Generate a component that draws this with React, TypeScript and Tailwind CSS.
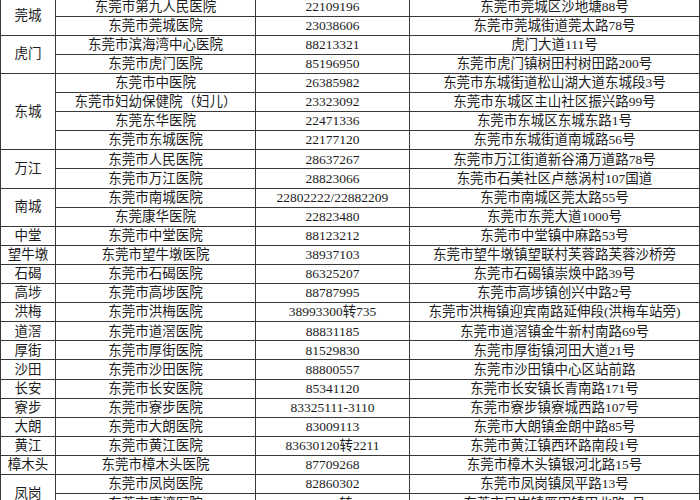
import React from "react";

type Hospital = { name: string; phone: string; address: string };
type Town = { town: string; hospitals: Hospital[] };

const towns: Town[] = [
  {
    town: "莞城",
    hospitals: [
      { name: "东莞市第九人民医院", phone: "22109196", address: "东莞市莞城区沙地塘88号" },
      { name: "东莞市莞城医院", phone: "23038606", address: "东莞市莞城街道莞太路78号" },
    ],
  },
  {
    town: "虎门",
    hospitals: [
      { name: "东莞市滨海湾中心医院", phone: "88213321", address: "虎门大道111号" },
      { name: "东莞市虎门医院", phone: "85196950", address: "东莞市虎门镇树田村树田路200号" },
    ],
  },
  {
    town: "东城",
    hospitals: [
      { name: "东莞市中医院", phone: "26385982", address: "东莞市东城街道松山湖大道东城段3号" },
      { name: "东莞市妇幼保健院（妇儿）", phone: "23323092", address: "东莞市东城区主山社区振兴路99号" },
      { name: "东莞东华医院", phone: "22471336", address: "东莞市东城区东城东路1号" },
      { name: "东莞市东城医院", phone: "22177120", address: "东莞市东城街道南城路56号" },
    ],
  },
  {
    town: "万江",
    hospitals: [
      { name: "东莞市人民医院", phone: "28637267", address: "东莞市万江街道新谷涌万道路78号" },
      { name: "东莞市万江医院", phone: "28823066", address: "东莞市石美社区卢慈涡村107国道" },
    ],
  },
  {
    town: "南城",
    hospitals: [
      { name: "东莞市南城医院", phone: "22802222/22882209", address: "东莞市南城区莞太路55号" },
      { name: "东莞康华医院", phone: "22823480", address: "东莞市东莞大道1000号" },
    ],
  },
  { town: "中堂", hospitals: [{ name: "东莞市中堂医院", phone: "88123212", address: "东莞市中堂镇中麻路53号" }] },
  { town: "望牛墩", hospitals: [{ name: "东莞市望牛墩医院", phone: "38937103", address: "东莞市望牛墩镇望联村芙蓉路芙蓉沙桥旁" }] },
  { town: "石碣", hospitals: [{ name: "东莞市石碣医院", phone: "86325207", address: "东莞市石碣镇崇焕中路39号" }] },
  { town: "高埗", hospitals: [{ name: "东莞市高埗医院", phone: "88787995", address: "东莞市高埗镇创兴中路2号" }] },
  { town: "洪梅", hospitals: [{ name: "东莞市洪梅医院", phone: "38993300转735", address: "东莞市洪梅镇迎宾南路延伸段(洪梅车站旁)" }] },
  { town: "道滘", hospitals: [{ name: "东莞市道滘医院", phone: "88831185", address: "东莞市道滘镇金牛新村南路69号" }] },
  { town: "厚街", hospitals: [{ name: "东莞市厚街医院", phone: "81529830", address: "东莞市厚街镇河田大道21号" }] },
  { town: "沙田", hospitals: [{ name: "东莞市沙田医院", phone: "88800557", address: "东莞市沙田镇中心区站前路" }] },
  { town: "长安", hospitals: [{ name: "东莞市长安医院", phone: "85341120", address: "东莞市长安镇长青南路171号" }] },
  { town: "寮步", hospitals: [{ name: "东莞市寮步医院", phone: "83325111-3110", address: "东莞市寮步镇寮城西路107号" }] },
  { town: "大朗", hospitals: [{ name: "东莞市大朗医院", phone: "83009113", address: "东莞市大朗镇金朗中路85号" }] },
  { town: "黄江", hospitals: [{ name: "东莞市黄江医院", phone: "83630120转2211", address: "东莞市黄江镇西环路南段1号" }] },
  { town: "樟木头", hospitals: [{ name: "东莞市樟木头医院", phone: "87709268", address: "东莞市樟木头镇银河北路15号" }] },
  {
    town: "凤岗",
    hospitals: [
      { name: "东莞市凤岗医院", phone: "82860302", address: "东莞市凤岗镇凤平路13号" },
      { name: "东莞市康湾医院", phone: "87506666转3316", address: "东莞市凤岗镇雁田镇田北路1号" },
    ],
  },
];

const spanClass: Record<number, string> = {
  1: "row-span-1",
  2: "row-span-2",
  4: "row-span-4",
};

const cell = "bg-white flex items-center justify-center whitespace-nowrap";

export default function App() {
  return (
    <div className="w-[700px] h-[500px] overflow-hidden bg-white">
      <div
        className="-mt-[3.6px] grid grid-cols-[54px_199px_153px_289px] auto-rows-[18.12px] gap-px p-px bg-[#3a3a3a] text-[13.5px] leading-none text-[#1c1c1c]"
        style={{ fontFamily: "'Liberation Serif', 'Noto Sans CJK SC', serif" }}
      >
        {towns.map((t) => (
          <React.Fragment key={t.town}>
            <div className={`${cell} ${spanClass[t.hospitals.length]}`}>{t.town}</div>
            {t.hospitals.map((h, i) => (
              <React.Fragment key={h.name}>
                {i > 0 && null}
                <div className={`${cell} col-start-2`}>{h.name}</div>
                <div className={cell}>{h.phone}</div>
                <div className={cell}>{h.address}</div>
              </React.Fragment>
            ))}
          </React.Fragment>
        ))}
      </div>
    </div>
  );
}
